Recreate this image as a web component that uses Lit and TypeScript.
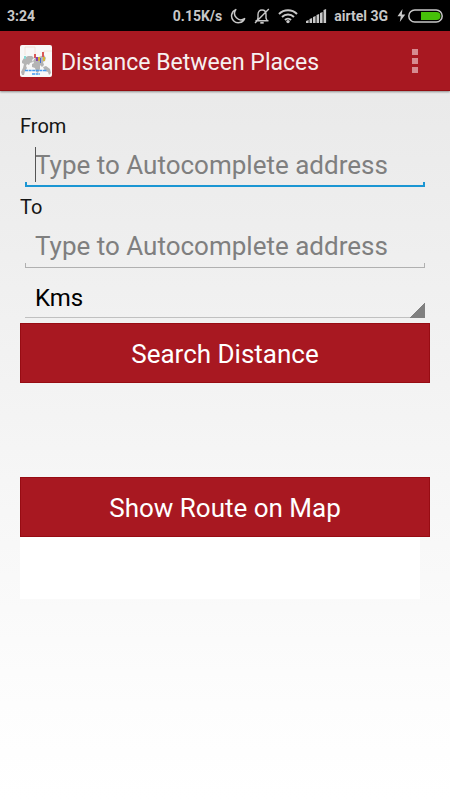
import { LitElement, html, css, svg } from "lit";
import { customElement } from "lit/decorators.js";

@customElement("status-bar")
export class StatusBar extends LitElement {
  static styles = css`
    :host {
      display: flex;
      align-items: center;
      height: 31px;
      padding: 0 7px;
      background: #000;
      color: #c8c8c8;
      font: 700 14px/20px Roboto, "Liberation Sans", sans-serif;
    }
    .time {
      flex: 1;
    }
    .icon {
      display: block;
      flex: none;
      margin-left: 8px;
    }
    .carrier {
      margin-left: 7px;
    }
    .bolt {
      margin-left: 9px;
    }
    .battery {
      margin-left: 2px;
    }
  `;

  render() {
    const bars = [2, 4, 6, 8, 10, 13];
    return html`
      <span class="time">3:24</span>
      <span>0.15K/s</span>
      <svg class="icon" width="16" height="16" viewBox="0 0 16 16" fill="none" stroke="#c8c8c8" stroke-width="1.5" stroke-linejoin="round">
        <path d="M5.8 1.6A6.8 6.8 0 1 0 14.6 10.6A6.4 6.4 0 0 1 5.8 1.6Z" />
      </svg>
      <svg class="icon" width="16" height="16" viewBox="0 0 16 16" fill="none" stroke="#c8c8c8" stroke-width="1.4">
        <path d="M1.5 12.8H14.5M3.2 12.5L4 10V6.5C4 3.6 5.6 2 8 2S12 3.6 12 6.5V10L13 12.5M1 15L14.8 1" />
        <path d="M6.3 14.8H9.7" stroke-width="1.8" />
      </svg>
      <svg class="icon" width="20" height="16" viewBox="0 0 20 16" fill="none" stroke="#c8c8c8" stroke-width="2">
        <path d="M1 6A12.6 12.6 0 0 1 19 6M4 9A8.5 8.5 0 0 1 16 9M7 12A4.3 4.3 0 0 1 13 12" />
        <circle cx="10" cy="13.6" r="1.7" fill="#c8c8c8" stroke="none" />
      </svg>
      <svg class="icon" width="21" height="14" viewBox="0 0 21 14" fill="#c8c8c8">
        ${bars.map(
          (h, i) => svg`<path d="M${i * 3.5} 14V${14 - h}L${i * 3.5 + 2.6} ${13 - h}V14Z" />`
        )}
      </svg>
      <span class="carrier">airtel 3G</span>
      <svg class="icon bolt" width="9" height="13" viewBox="0 0 9 13" fill="#c8c8c8">
        <path d="M5.5 0L0.5 7.2H3.8L2.8 13L8.3 5.4H4.8Z" />
      </svg>
      <svg class="icon battery" width="35" height="14" viewBox="0 0 35 14">
        <rect x="0.8" y="1" width="33.4" height="12" rx="6" fill="none" stroke="#c8c8c8" stroke-width="1.5" />
        <path d="M13 3H28.5A4 4 0 0 1 28.5 11H13Z" fill="#46c009" />
      </svg>
    `;
  }
}

@customElement("title-bar")
export class TitleBar extends LitElement {
  static styles = css`
    :host {
      display: flex;
      align-items: center;
      height: 60px;
      padding: 0 20px;
      background: #a81821;
      box-shadow: inset 0 -1px #930d12, 0 1px 2px #00000066;
      color: #f6f0f0;
    }
    .logo {
      flex: none;
      margin-right: 9px;
    }
    h1 {
      flex: 1;
      margin: 0;
      padding-top: 4px;
      font: 400 23px/32px Roboto, "Liberation Sans", sans-serif;
      white-space: nowrap;
    }
    .menu {
      display: flex;
      flex-direction: column;
      align-items: center;
      gap: 3px;
      padding: 0;
      width: 30px;
      border: 0;
      background: none;
    }
    .dot {
      width: 6px;
      height: 6px;
      background: #d68a90;
    }
  `;

  render() {
    return html`
      <svg class="logo" width="32" height="32" viewBox="0 0 32 32">
        <rect width="32" height="32" rx="2" fill="#f8f8f8" />
        <path d="M5 10V2H15V9M24 8V6H32" fill="none" stroke="#f0ddd2" stroke-width="0.8" />
        <path
          d="M2 16L4 13L8 11L12 11L14 13L12 15L13 17L10 18L9 20L7 19L6 21L7 23L5 26L4 30L2 30L1 27L3 23L4 19L2 18Z"
          fill="#b4b4b4"
        />
        <path
          d="M13 16L15 13L19 12L24 10L26 13L25 16L23 17L24 20L22 22L20 20L20 24L18 28L16 27L15 23L12 22L12 19L14 18Z"
          fill="#b4b4b4"
        />
        <path d="M23 22L26 21L30 24L31 28L29 30L28 27L25 26Z" fill="#b4b4b4" />
        <path d="M4 11H6V14H4Z" fill="#8ad9d5" />
        <path d="M14 9H16V13H14ZM22 7H24V12H22Z" fill="#d95858" />
        <path d="M16 12H18V16H16Z" fill="#8342b0" />
        <path d="M18 12H20V16H18ZM23 12H25V16H23Z" fill="#d6b637" />
        <path d="M20 13H21V18H20Z" fill="#4768c9" />
        <path d="M5 25.5H27M12 29H20" stroke="#4299ef" stroke-width="1.3" stroke-dasharray="3 0.6" />
      </svg>
      <h1>Distance Between Places</h1>
      <button class="menu" aria-label="More options">
        <span class="dot"></span><span class="dot"></span><span class="dot"></span>
      </button>
    `;
  }
}

@customElement("address-field")
export class AddressField extends LitElement {
  static properties = {
    label: { type: String },
    active: { type: Boolean, reflect: true },
  };
  declare label: string;
  declare active: boolean;

  static styles = css`
    :host {
      display: block;
      --line: #b0b0b0;
      --weight: 1px;
    }
    :host([active]) {
      --line: #1b96d3;
      --weight: 2px;
    }
    label {
      display: block;
      color: #151515;
      font: 400 20px/24px Roboto, "Liberation Sans", sans-serif;
    }
    .box {
      position: relative;
      margin: 0 5px;
    }
    input {
      display: block;
      box-sizing: border-box;
      width: 100%;
      height: 49px;
      padding: 4px 10px 0;
      border: 0;
      border-radius: 0;
      outline: 0;
      background:
        linear-gradient(var(--line), var(--line)) left bottom / 100% var(--weight) no-repeat,
        linear-gradient(var(--line), var(--line)) left bottom / var(--weight) 5px no-repeat,
        linear-gradient(var(--line), var(--line)) right bottom / var(--weight) 5px no-repeat;
      color: #000;
      font: 400 26px/32px Roboto, "Liberation Sans", sans-serif;
    }
    input::placeholder {
      color: #7f7f7f;
      opacity: 1;
    }
    .caret {
      position: absolute;
      left: 10px;
      top: 9px;
      width: 1px;
      height: 35px;
      background: #555;
    }
  `;

  render() {
    return html`
      <label for="address">${this.label}</label>
      <div class="box">
        <input id="address" type="text" placeholder="Type to Autocomplete address" />
        ${this.active ? html`<span class="caret"></span>` : null}
      </div>
    `;
  }
}

@customElement("app-root")
export class AppRoot extends LitElement {
  static styles = css`
    :host {
      display: flex;
      flex-direction: column;
      min-height: 100vh;
      background: linear-gradient(#e7e7e7, #fdfdfd 88%, #fff);
      font-family: Roboto, "Liberation Sans", sans-serif;
    }
    main {
      display: flex;
      flex-direction: column;
      padding: 23px 20px;
    }
    .fields {
      display: flex;
      flex-direction: column;
      gap: 8px;
    }
    .unit {
      margin: 0 5px 5px;
    }
    select {
      display: block;
      box-sizing: border-box;
      appearance: none;
      width: 100%;
      height: 50px;
      padding: 10px 10px 0;
      border: 0;
      border-radius: 0;
      background:
        linear-gradient(135deg, transparent 50%, #808080 50%) right bottom / 15px 15px no-repeat,
        linear-gradient(#c0c0c0, #c0c0c0) left bottom / 100% 1px no-repeat;
      color: #000;
      font: 400 24px/32px Roboto, "Liberation Sans", sans-serif;
    }
    .action {
      height: 60px;
      padding: 2px 0 0;
      border: 1px solid #970c13;
      background: #a81821;
      color: #fff;
      font: 400 26px/32px Roboto, "Liberation Sans", sans-serif;
    }
    .distance {
      height: 94px;
    }
    .route {
      height: 62px;
      margin-right: 10px;
      background: #fff;
    }
  `;

  render() {
    return html`
      <status-bar></status-bar>
      <title-bar></title-bar>
      <main>
        <div class="fields">
          <address-field label="From" active></address-field>
          <address-field label="To"></address-field>
        </div>
        <div class="unit">
          <select aria-label="Unit">
            <option>Kms</option>
            <option>Miles</option>
          </select>
        </div>
        <button class="action">Search Distance</button>
        <output class="distance"></output>
        <button class="action">Show Route on Map</button>
        <div class="route"></div>
      </main>
    `;
  }
}
